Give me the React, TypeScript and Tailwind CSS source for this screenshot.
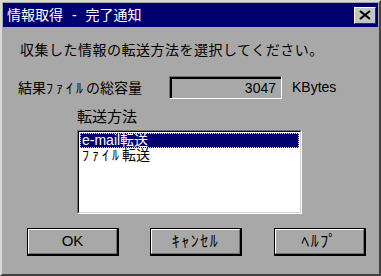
const font = "font-['Liberation_Sans','Noto_Sans_CJK_JP',sans-serif]";

function Win3Button({ children, className }: { children: React.ReactNode; className?: string }) {
  return (
    <div className={`w-[92px] h-[28px] border border-b-2 border-r-2 border-black ${className ?? ""}`}>
      <div className="w-full h-full flex items-center justify-center border-t border-l border-white border-b border-r border-b-[#707070] border-r-[#707070] text-black">
        {children}
      </div>
    </div>
  );
}

export default function App() {
  return (
    <div className={`w-[381px] h-[276px] bg-[#a8a8a8] border-2 border-t-[#d8d8d8] border-l-[#d8d8d8] border-r-[#404040] border-b-[#404040] p-[1px] flex flex-col ${font}`}>
      {/* title bar */}
      <div className="h-[24px] bg-[#000070] flex items-center justify-between shrink-0">
        <span className="pl-[4px] text-white text-[14px] leading-[24px]">
          情報取得<span className="px-[5px]"> - </span>完了通知
        </span>
        <div className="mr-[2px] w-[22px] h-[17px] bg-[#c4c4c4] border border-t-white border-l-white border-r-[#303030] border-b-[#303030] flex items-center justify-center">
          <svg width="12" height="10" viewBox="0 0 12 10">
            <path d="M1 1 L11 9 M11 1 L1 9" stroke="black" strokeWidth="2.2" />
          </svg>
        </div>
      </div>

      {/* body */}
      <div className="mt-[13px] ml-[17px] h-[20px] leading-[20px] text-[14px] tracking-[0.5px] text-black">
        収集した情報の転送方法を選択してください。
      </div>

      <div className="mt-[16px] h-[23px] flex items-center text-black">
        <span className="ml-[15px] w-[151px] text-[14px] leading-[20px]">
          結果<span className="tracking-[3px]">ﾌｧｲﾙ</span>の総容量
        </span>
        <div className="w-[113px] h-[23px] border border-t-[#707070] border-l-[#707070] border-r-white border-b-white">
          <div className="w-full h-full border-t-2 border-l-2 border-black flex items-center justify-end pr-[5px] text-[14px]">
            3047
          </div>
        </div>
        <span className="ml-[10px] text-[14px]">KBytes</span>
      </div>

      <div className="mt-[8px] ml-[74px] h-[20px] leading-[20px] text-[15px] text-black">転送方法</div>

      <div className="mt-[3px] ml-[74px] w-[225px] h-[84px] border border-t-[#707070] border-l-[#707070] border-r-white border-b-white">
        <div className="w-full h-full bg-white border border-t-black border-l-black border-r-[#d0d0d0] border-b-[#d0d0d0] p-[1px] text-[14px]">
          <div className="h-[15px] leading-[15px] bg-[#000070] text-white pl-[2px] outline-1 outline-dotted outline-[#ffff00] -outline-offset-1">
            e-mail転送
          </div>
          <div className="h-[15px] leading-[15px] text-black pl-[2px]">
            <span className="tracking-[3px]">ﾌｧｲﾙ</span>転送
          </div>
        </div>
      </div>

      <div className="mt-[14px] flex text-[15px]">
        <Win3Button className="ml-[24px]">OK</Win3Button>
        <Win3Button className="ml-[31px]">
          <span className="text-[16px] tracking-[1.5px]">ｷｬﾝｾﾙ</span>
        </Win3Button>
        <Win3Button className="ml-[32px]">
          <span className="text-[16px] tracking-[1.5px]">ﾍﾙﾌﾟ</span>
        </Win3Button>
      </div>
    </div>
  );
}
